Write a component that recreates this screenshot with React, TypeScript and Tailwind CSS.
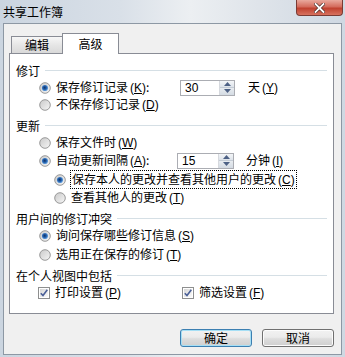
import React from "react";

const FONT = { fontFamily: '"Noto Sans CJK SC", "Noto Sans", sans-serif' };

function Radio({ checked }: { checked?: boolean }) {
  return (
    <svg width="12" height="12" viewBox="0 0 12 12" className="shrink-0">
      <defs>
        <linearGradient id="rg" x1="0" y1="0" x2="1" y2="1">
          <stop offset="0" stopColor="#c9c9c9" />
          <stop offset="1" stopColor="#f7f7f7" />
        </linearGradient>
        <radialGradient id="rd" cx="0.45" cy="0.45" r="0.6">
          <stop offset="0" stopColor="#0b2f66" />
          <stop offset="0.55" stopColor="#2a68b4" />
          <stop offset="1" stopColor="#7fb8ee" />
        </radialGradient>
      </defs>
      <circle cx="6" cy="6" r="5.3" fill="url(#rg)" stroke="#8e8f8f" strokeWidth="0.9" />
      {checked && <circle cx="6" cy="6" r="3.1" fill="url(#rd)" />}
    </svg>
  );
}

function Check() {
  return (
    <svg width="12" height="12" viewBox="0 0 12 12" className="shrink-0">
      <defs>
        <linearGradient id="cg" x1="0" y1="0" x2="1" y2="1">
          <stop offset="0" stopColor="#d6d6d6" />
          <stop offset="1" stopColor="#fbfbfb" />
        </linearGradient>
      </defs>
      <rect x="0.5" y="0.5" width="11" height="11" fill="#ffffff" stroke="#8e8f8f" />
      <rect x="2" y="2" width="8" height="8" fill="url(#cg)" />
      <path d="M2.8 6.2 L5 8.6 L9.3 2.8" fill="none" stroke="#4a5f97" strokeWidth="1.6" />
    </svg>
  );
}

function Acc({ k }: { k: string }) {
  return (
    <span className="ml-[2px]" style={{ fontFamily: '"Liberation Sans", sans-serif' }}>
      (<span className="underline">{k}</span>)
    </span>
  );
}

function Spin({ value, w }: { value: string; w: string }) {
  return (
    <div className={`flex h-[16px] ${w} border border-[#abadb3] bg-white`}>
      <div
        className="flex-1 pl-[4px] text-[12px] leading-[14px] text-black"
        style={{ fontFamily: '"Liberation Sans", sans-serif' }}
      >
        {value}
      </div>
      <div className="flex w-[15px] flex-col border-l border-[#d6d9de]">
        <div className="flex flex-1 items-center justify-center bg-[linear-gradient(#f4f6f8,#dde3ea)] border-b border-[#c4ccd6]">
          <svg width="7" height="4" viewBox="0 0 7 4">
            <path d="M0 4 L3.5 0 L7 4 Z" fill="#4d6185" />
          </svg>
        </div>
        <div className="flex flex-1 items-center justify-center bg-[linear-gradient(#e8ecf0,#d4dbe3)]">
          <svg width="7" height="4" viewBox="0 0 7 4">
            <path d="M0 0 L3.5 4 L7 0 Z" fill="#4d6185" />
          </svg>
        </div>
      </div>
    </div>
  );
}

function GroupLabel({ text, mt }: { text: string; mt: string }) {
  return (
    <div className={`flex h-[17px] items-center ${mt}`}>
      <span className="whitespace-nowrap">{text}</span>
      <div className="ml-[5px] h-px flex-1 bg-[#d5dfe5]" />
    </div>
  );
}

export default function App() {
  return (
    <div
      className="relative h-[357px] w-[345px] overflow-hidden bg-[linear-gradient(90deg,#cbd5e0_0%,#d9e0e8_35%,#eceff2_55%,#dfe4ea_75%,#cfd8e2_100%)] text-[12px] text-black"
      style={FONT}
    >
      {/* title bar */}
      <div className="flex h-[23px] items-start">
        <div className="ml-[3px] mt-[3px] text-[12px] leading-[17px]">共享工作簿</div>
        <div className="ml-auto mr-[2px] flex h-[16px] w-[47px] items-center justify-center rounded-b-[4px] border border-t-0 border-[#7a3b34] bg-[linear-gradient(#e9a99d,#d46b5c_45%,#c0412f_55%,#d7725f)]">
          <svg width="11" height="10" viewBox="0 0 11 10">
            <path d="M1.5 1 L9.5 9 M9.5 1 L1.5 9" stroke="#4a2a26" strokeWidth="3.2" strokeLinecap="square" />
            <path d="M1.5 1 L9.5 9 M9.5 1 L1.5 9" stroke="#ffffff" strokeWidth="1.8" strokeLinecap="square" />
          </svg>
        </div>
      </div>

      {/* body */}
      <div className="mx-[3px] flex h-[332px] flex-col border border-[#8d98a4] bg-[#f0f0f0]">
        <div className="ml-[5px] mt-[9px] w-[325px]">
          {/* tabs */}
          <div className="flex h-[20px] items-end pl-[2px]">
            <div className="flex h-[17px] w-[51px] items-center justify-center border border-b-0 border-r-0 border-[#898c95] bg-[linear-gradient(#f7f7f7,#e6e6e6_50%,#d9d9d9)]">
              编辑
            </div>
            <div className="relative z-10 -mb-px flex h-[21px] w-[57px] items-center justify-center border border-b-0 border-[#898c95] bg-white pb-[1px]">
              高级
            </div>
          </div>
          {/* panel */}
          <div className="h-[261px] border border-[#898c95] bg-white pl-[6px] pr-[6px]">
            <GroupLabel text="修订" mt="mt-[8px]" />
            <div className="flex h-[17px] items-center pl-[23px]">
              <Radio checked />
              <span className="ml-[5px] w-[124px] whitespace-nowrap">
                保存修订记录<Acc k="K" />:
              </span>
              <Spin value="30" w="w-[55px]" />
              <span className="ml-[13px] whitespace-nowrap">
                天<Acc k="Y" />
              </span>
            </div>
            <div className="flex h-[17px] items-center pl-[23px]">
              <Radio />
              <span className="ml-[5px] whitespace-nowrap">
                不保存修订记录<Acc k="D" />
              </span>
            </div>

            <GroupLabel text="更新" mt="mt-[4px]" />
            <div className="flex h-[17px] items-center pl-[23px]">
              <Radio />
              <span className="ml-[5px] whitespace-nowrap">
                保存文件时<Acc k="W" />
              </span>
            </div>
            <div className="flex h-[19px] items-center pl-[23px]">
              <Radio checked />
              <span className="ml-[5px] w-[121px] whitespace-nowrap">
                自动更新间隔<Acc k="A" />:
              </span>
              <Spin value="15" w="w-[57px]" />
              <span className="ml-[12px] whitespace-nowrap">
                分钟<Acc k="I" />
              </span>
            </div>
            <div className="mt-px flex h-[17px] items-center pl-[38px]">
              <Radio checked />
              <span className="ml-[4px] whitespace-nowrap border border-dotted border-black px-px leading-[15px]">
                保存本人的更改并查看其他用户的更改<Acc k="C" />
              </span>
            </div>
            <div className="mt-px flex h-[17px] items-center pl-[38px]">
              <Radio />
              <span className="ml-[5px] whitespace-nowrap">
                查看其他人的更改<Acc k="T" />
              </span>
            </div>

            <GroupLabel text="用户间的修订冲突" mt="mt-[4px]" />
            <div className="flex h-[17px] items-center pl-[23px]">
              <Radio checked />
              <span className="ml-[5px] whitespace-nowrap">
                询问保存哪些修订信息<Acc k="S" />
              </span>
            </div>
            <div className="mt-[2px] flex h-[17px] items-center pl-[23px]">
              <Radio />
              <span className="ml-[5px] whitespace-nowrap">
                选用正在保存的修订<Acc k="T" />
              </span>
            </div>

            <GroupLabel text="在个人视图中包括" mt="mt-[4px]" />
            <div className="flex h-[17px] items-center pl-[22px]">
              <div className="flex w-[144px] items-center">
                <Check />
                <span className="ml-[5px] whitespace-nowrap">
                  打印设置<Acc k="P" />
                </span>
              </div>
              <div className="flex items-center">
                <Check />
                <span className="ml-[5px] whitespace-nowrap">
                  筛选设置<Acc k="F" />
                </span>
              </div>
            </div>
          </div>
        </div>

        {/* buttons */}
        <div className="mt-[15px] flex justify-end gap-[10px] pr-[7px]">
          <button className="flex h-[18px] w-[72px] items-center justify-center rounded-[3px] border border-[#3c7fb1] bg-[linear-gradient(#f2f2f2,#ebebeb_45%,#dddddd_55%,#cfcfcf)] shadow-[inset_0_0_0_1px_#a6dff5]">
            确定
          </button>
          <button className="flex h-[18px] w-[72px] items-center justify-center rounded-[3px] border border-[#707070] bg-[linear-gradient(#f2f2f2,#ebebeb_45%,#dddddd_55%,#cfcfcf)] shadow-[inset_0_0_0_1px_#fcfcfc]">
            取消
          </button>
        </div>
      </div>
    </div>
  );
}
